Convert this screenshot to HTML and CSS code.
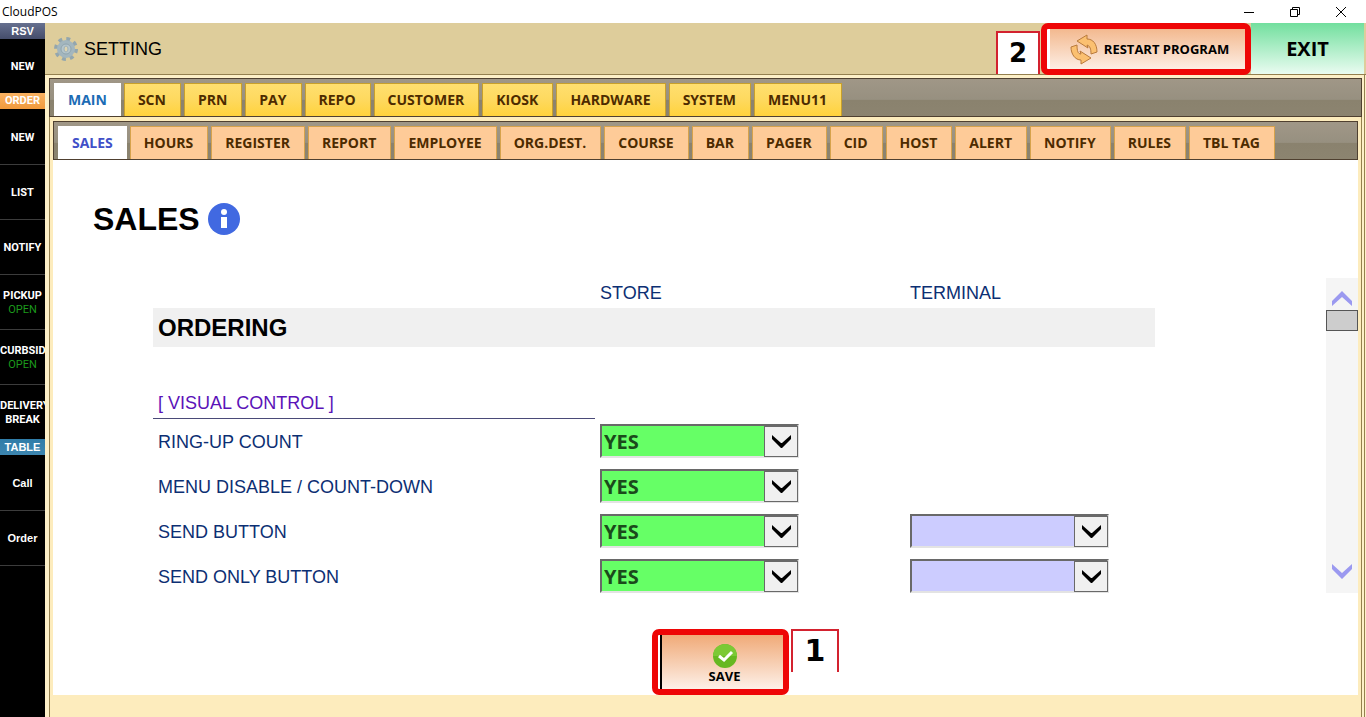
FILE: index.html
```html
<!DOCTYPE html>
<html lang="en">
<head>
  <meta charset="UTF-8">
  <meta name="viewport" content="width=device-width, initial-scale=1.0">
  <title>CloudPOS</title>
  <link rel="stylesheet" href="styles.css">
</head>
<body>
  <div class="titlebar">
    <span class="app-name">CloudPOS</span>
    <div class="window-buttons">
      <button type="button" aria-label="Minimize"><svg width="12" height="12" viewBox="0 0 12 12"><path d="M1 6.5h10"/></svg></button>
      <button type="button" aria-label="Restore"><svg width="12" height="12" viewBox="0 0 12 12"><path d="M1.5 3.5h7v7h-7zM3.5 3.5v-2h7v7h-2"/></svg></button>
      <button type="button" aria-label="Close"><svg width="12" height="12" viewBox="0 0 12 12"><path d="M1 1l10 10M11 1L1 11"/></svg></button>
    </div>
  </div>

  <div class="app">
    <nav class="sidebar">
      <h2 class="group rsv">RSV</h2>
      <a href="#" class="plain">NEW</a>
      <h2 class="group order">ORDER</h2>
      <a href="#">NEW</a>
      <a href="#">LIST</a>
      <a href="#">NOTIFY</a>
      <a href="#">PICKUP<span class="open">OPEN</span></a>
      <a href="#">CURBSID<span class="open">OPEN</span></a>
      <a href="#" class="plain">DELIVERY<span>BREAK</span></a>
      <h2 class="group table">TABLE</h2>
      <a href="#" class="mixed">Call</a>
      <a href="#" class="mixed">Order</a>
    </nav>

    <div class="main">
      <header class="header">
        <svg class="gear" width="24" height="24" viewBox="0 0 24 24">
          <circle cx="12" cy="12" r="10" fill="none" stroke="#93a6ae" stroke-width="4" stroke-dasharray="3.8 4.054"/>
          <circle cx="12" cy="12" r="7" fill="#bccdd4" stroke="#a3b6be" stroke-width="4"/>
          <circle cx="12" cy="12" r="5" fill="#b6c6cc" stroke="#8fa4ae"/>
          <ellipse cx="12" cy="12" rx="2" ry="3" fill="#ded4b0" stroke="#9db0b8"/>
        </svg>
        <span class="header-title">SETTING</span>
        <span class="callout">2</span>
        <div class="highlight restart-frame">
          <button type="button" class="restart">
            <svg width="28" height="31" viewBox="0 0 28 31" fill="#fbc070" stroke="#b97a3c" stroke-linejoin="round">
              <path d="M7 7 L17 1 L17 5 C23 5 27 10 27 18 L21 20 C21 15 20 12 17 11 L18 14 Z"/>
              <path d="M21 24 L11 30 L11 26 C5 26 1 20 1 13 L7 11 C7 17 8 20 11 20 L10 17 Z"/>
            </svg>
            RESTART PROGRAM
          </button>
        </div>
        <button type="button" class="exit">EXIT</button>
      </header>

      <div class="panel">
        <nav class="tabs">
          <a href="#" class="active">MAIN</a>
          <a href="#">SCN</a>
          <a href="#">PRN</a>
          <a href="#">PAY</a>
          <a href="#">REPO</a>
          <a href="#">CUSTOMER</a>
          <a href="#">KIOSK</a>
          <a href="#">HARDWARE</a>
          <a href="#">SYSTEM</a>
          <a href="#">MENU11</a>
        </nav>

        <div class="subpanel">
          <nav class="tabs subtabs">
            <a href="#" class="active">SALES</a>
            <a href="#">HOURS</a>
            <a href="#">REGISTER</a>
            <a href="#">REPORT</a>
            <a href="#">EMPLOYEE</a>
            <a href="#">ORG.DEST.</a>
            <a href="#">COURSE</a>
            <a href="#">BAR</a>
            <a href="#">PAGER</a>
            <a href="#">CID</a>
            <a href="#">HOST</a>
            <a href="#">ALERT</a>
            <a href="#">NOTIFY</a>
            <a href="#">RULES</a>
            <a href="#">TBL TAG</a>
          </nav>

          <main class="content">
            <h1>
              SALES
              <svg width="32" height="32" viewBox="0 0 32 32">
                <circle cx="16" cy="16" r="16" fill="#4169e1"/>
                <circle cx="16" cy="9" r="3" fill="#fff"/>
                <path d="M13 14h6v11h-6z" fill="#fff"/>
              </svg>
            </h1>

            <div class="settings">
              <form class="list">
                <div class="row columns">
                  <span></span>
                  <span>STORE</span>
                  <span>TERMINAL</span>
                </div>
                <h2>ORDERING</h2>
                <div class="row">
                  <h3>[ VISUAL CONTROL ]</h3>
                </div>
                <div class="rows">
                  <div class="row">
                    <label for="ring-up">RING-UP COUNT</label>
                    <div class="select yes">
                      <select id="ring-up"><option>YES</option><option>NO</option></select>
                      <span class="arrow"><svg width="19" height="13" viewBox="0 0 19 13"><path d="M0 0l9 8h1l9-8v4l-9 9H9L0 4z"/></svg></span>
                    </div>
                  </div>
                  <div class="row">
                    <label for="menu-disable">MENU DISABLE / COUNT-DOWN</label>
                    <div class="select yes">
                      <select id="menu-disable"><option>YES</option><option>NO</option></select>
                      <span class="arrow"><svg width="19" height="13" viewBox="0 0 19 13"><path d="M0 0l9 8h1l9-8v4l-9 9H9L0 4z"/></svg></span>
                    </div>
                  </div>
                  <div class="row">
                    <label for="send">SEND BUTTON</label>
                    <div class="select yes">
                      <select id="send"><option>YES</option><option>NO</option></select>
                      <span class="arrow"><svg width="19" height="13" viewBox="0 0 19 13"><path d="M0 0l9 8h1l9-8v4l-9 9H9L0 4z"/></svg></span>
                    </div>
                    <div class="select">
                      <select aria-label="Send button, terminal"><option></option><option>YES</option><option>NO</option></select>
                      <span class="arrow"><svg width="19" height="13" viewBox="0 0 19 13"><path d="M0 0l9 8h1l9-8v4l-9 9H9L0 4z"/></svg></span>
                    </div>
                  </div>
                  <div class="row">
                    <label for="send-only">SEND ONLY BUTTON</label>
                    <div class="select yes">
                      <select id="send-only"><option>YES</option><option>NO</option></select>
                      <span class="arrow"><svg width="19" height="13" viewBox="0 0 19 13"><path d="M0 0l9 8h1l9-8v4l-9 9H9L0 4z"/></svg></span>
                    </div>
                    <div class="select">
                      <select aria-label="Send only button, terminal"><option></option><option>YES</option><option>NO</option></select>
                      <span class="arrow"><svg width="19" height="13" viewBox="0 0 19 13"><path d="M0 0l9 8h1l9-8v4l-9 9H9L0 4z"/></svg></span>
                    </div>
                  </div>
                </div>
              </form>

              <div class="scrollbar">
                <button type="button" aria-label="Scroll up"><svg width="20" height="15" viewBox="0 0 20 15"><path d="M0 10L10 0l10 10v5L10 6 0 15z"/></svg></button>
                <div class="thumb"></div>
                <button type="button" class="down" aria-label="Scroll down"><svg width="20" height="15" viewBox="0 0 20 15"><path d="M0 5l10 10L20 5V0L10 9 0 0z"/></svg></button>
              </div>
            </div>

            <div class="actions">
              <div class="highlight">
                <button type="button" class="save">
                  <svg width="24" height="24" viewBox="0 0 24 24">
                    <circle cx="12" cy="12" r="12" fill="#66b821"/>
                    <path d="M0 12a12 12 0 0 1 24 0z" fill="#7cc936"/>
                    <path d="M6 12l5 4 8-8" fill="none" stroke="#fff" stroke-width="3"/>
                  </svg>
                  SAVE
                </button>
              </div>
              <span class="callout">1</span>
            </div>
          </main>
        </div>
      </div>
    </div>
  </div>
</body>
</html>
```
FILE: styles.css
```css
* {
  box-sizing: border-box;
}
body {
  margin: 0;
  min-height: 100vh;
  display: flex;
  flex-direction: column;
  font-family: "Liberation Sans", Arial, sans-serif;
  font-size: 18px;
  color: #000;
  background: #fff;
}
h1, h2, h3 {
  margin: 0;
}
a {
  text-decoration: none;
}
button {
  padding: 0;
  border: none;
  background: none;
  color: #000;
  font-family: "Open Sans", "Segoe UI", sans-serif;
  font-weight: bold;
  cursor: pointer;
}
.titlebar {
  display: flex;
  justify-content: space-between;
  align-items: center;
  height: 23px;
  padding-left: 2px;
}
.app-name {
  font-family: "Open Sans", "Segoe UI", sans-serif;
  font-size: 12px;
}
.window-buttons {
  display: flex;
  padding-right: 2px;
}
.window-buttons button {
  display: grid;
  place-items: center;
  width: 46px;
  height: 20px;
}
.window-buttons svg {
  fill: none;
  stroke: #000;
}
.app {
  flex: 1;
  display: flex;
}

/* left menu */
.sidebar {
  flex: none;
  width: 45px;
  overflow: hidden;
  background: #000;
  font-family: Roboto, sans-serif;
}
.group {
  height: 17px;
  border-bottom: 1px solid #000;
  color: #fff;
  font-size: 11px;
  line-height: 16px;
  text-align: center;
}
.rsv {
  height: 16px;
  border-bottom: none;
  background: linear-gradient(#66708f, #454d6b);
}
.order {
  background: linear-gradient(#f9b262, #f19a3c);
}
.table {
  background: linear-gradient(#2f7ca8, #3d86b0);
}
.rsv, .table, .sidebar .mixed {
  font-family: "Liberation Sans", Arial, sans-serif;
}
.sidebar a {
  display: flex;
  flex-direction: column;
  justify-content: center;
  align-items: safe center;
  height: 55px;
  padding-top: 2px;
  border-bottom: 1px solid #3c3c3c;
  color: #fff;
  font-size: 11px;
  font-weight: bold;
  line-height: 14px;
}
.sidebar .plain {
  height: 54px;
  border-bottom: none;
}
.sidebar .mixed {
  padding-top: 0;
}
.sidebar .open {
  color: #1c9a1c;
  font-weight: normal;
}

/* header */
.main {
  flex: 1;
  min-width: 0;
  display: flex;
  flex-direction: column;
  background: #fdf0c8;
}
.header {
  display: flex;
  align-items: center;
  height: 52px;
  padding: 0 2px 0 9px;
  background: #decd9b;
  border-bottom: 1px solid #94804f;
}
.header-title {
  flex: 1;
  padding: 2px 0 0 6px;
}
.callout {
  width: 48px;
  height: 43px;
  border: 2px solid #d3222f;
  border-bottom: none;
  background: #fff;
  font-family: "DejaVu Sans", Verdana, sans-serif;
  font-size: 26px;
  font-weight: bold;
  line-height: 40px;
  text-align: center;
}
.header .callout {
  align-self: flex-end;
  width: 44px;
  margin-right: 1px;
}
.actions .callout {
  font-size: 30px;
}
.highlight {
  border: 6px solid #ee0606;
  border-radius: 7px;
  background: #fff;
}
.restart-frame {
  align-self: flex-start;
  height: 52px;
}
.restart {
  display: flex;
  justify-content: center;
  align-items: center;
  gap: 6px;
  width: 195px;
  height: 40px;
  margin-left: 3px;
  padding-left: 4px;
  background: linear-gradient(#f3b98f, #fdeee4);
  font-size: 13px;
}
.exit {
  width: 113px;
  height: 100%;
  background: linear-gradient(#72df9e, #eafcf1);
  font-size: 20px;
}

/* tabs */
.panel {
  flex: 1;
  display: flex;
  flex-direction: column;
  margin: 0 1px;
  padding: 3px 2px 0 3px;
  border-right: 1px solid #94804f;
}
.tabs {
  display: flex;
  gap: 3px;
  height: 39px;
  padding: 4px 4px 0;
  border: 1px solid #4f4030;
  background: linear-gradient(#a09787 0, #979080 55%, #8a826e 58%, #8c8470 100%);
}
.tabs a {
  display: flex;
  align-items: center;
  padding: 0 14px 2px 13px;
  border: 1px solid #c8a02c;
  border-bottom: none;
  background: linear-gradient(#ffdf70, #fed95e 50%, #ffd23c);
  color: #4d2b00;
  font-family: "Open Sans", "Segoe UI", sans-serif;
  font-size: 14px;
  font-weight: bold;
  white-space: nowrap;
}
.tabs .active {
  padding-right: 13px;
  border-color: #fff;
  background: #fff;
  color: #1c6cb5;
}
.subpanel {
  flex: 1;
  display: flex;
  flex-direction: column;
  padding: 4px 3px 22px;
  border: 1px solid #94804f;
  border-width: 0 1px;
  background: #fdecbd;
}
.subtabs a {
  border-color: #d6a24c;
  background: #fecb98;
}
.subtabs .active {
  color: #4150c8;
}

/* settings */
.content {
  flex: 1;
  display: flex;
  flex-direction: column;
  background: #fff;
}
h1 {
  display: flex;
  align-items: center;
  gap: 8px;
  padding: 40px;
  font-size: 32px;
  line-height: 38px;
}
.settings {
  display: flex;
  justify-content: space-between;
}
.list {
  flex: 1;
  margin: 0 171px 0 100px;
}
.row {
  display: grid;
  grid-template-columns: 447fr 310fr 245fr;
  align-items: center;
  color: #0c2f73;
}
.columns {
  height: 30px;
}
h2 {
  font-size: 24px;
}
.list h2 {
  padding-left: 5px;
  background: #f0f0f0;
  line-height: 39px;
}
h3 {
  margin: 42px 5px 0 0;
  padding-left: 5px;
  border-bottom: 1px solid #4a4a78;
  color: #5a12b8;
  font-size: 18px;
  font-weight: normal;
  line-height: 29px;
}
.rows {
  display: flex;
  flex-direction: column;
  gap: 11px;
  padding-top: 5px;
}
.row label {
  padding: 2px 0 0 5px;
}
.select {
  position: relative;
  width: 199px;
  height: 34px;
}
.select select {
  width: 100%;
  height: 100%;
  padding: 1px 36px 0 2px;
  border: 2px solid;
  border-color: #696969 #e3e3e3 #e3e3e3 #696969;
  border-radius: 0;
  background: #ccccff;
  color: #1b4a1b;
  font-family: "Open Sans", "Segoe UI", sans-serif;
  font-size: 20px;
  font-weight: bold;
  appearance: none;
}
.yes select {
  background: #66ff66;
}
.arrow {
  position: absolute;
  top: 2px;
  right: 1px;
  display: grid;
  place-items: center;
  width: 34px;
  height: 31px;
  border: 1px solid #696969;
  background: #f0f0f0;
  pointer-events: none;
}
.scrollbar {
  display: flex;
  flex-direction: column;
  width: 32px;
  background: #f5f5f5;
}
.scrollbar button {
  display: grid;
  place-items: center;
  height: 32px;
  padding-top: 8px;
  fill: #9b99f0;
}
.scrollbar .down {
  margin-top: auto;
  padding: 0;
  height: 44px;
}
.thumb {
  height: 21px;
  border: 1px solid #555;
  background: #cdcdcd;
}
.actions {
  display: flex;
  justify-content: center;
  gap: 2px;
  margin-top: auto;
  padding: 24px 0 0 80px;
}
.save {
  display: flex;
  flex-direction: column;
  justify-content: center;
  align-items: center;
  width: 123px;
  height: 54px;
  margin-left: 2px;
  padding: 4px 0 0 4px;
  border-left: 2px solid #000;
  background: linear-gradient(#f0aa78, #fdf0e8);
  font-size: 13px;
  line-height: 16px;
}
```
